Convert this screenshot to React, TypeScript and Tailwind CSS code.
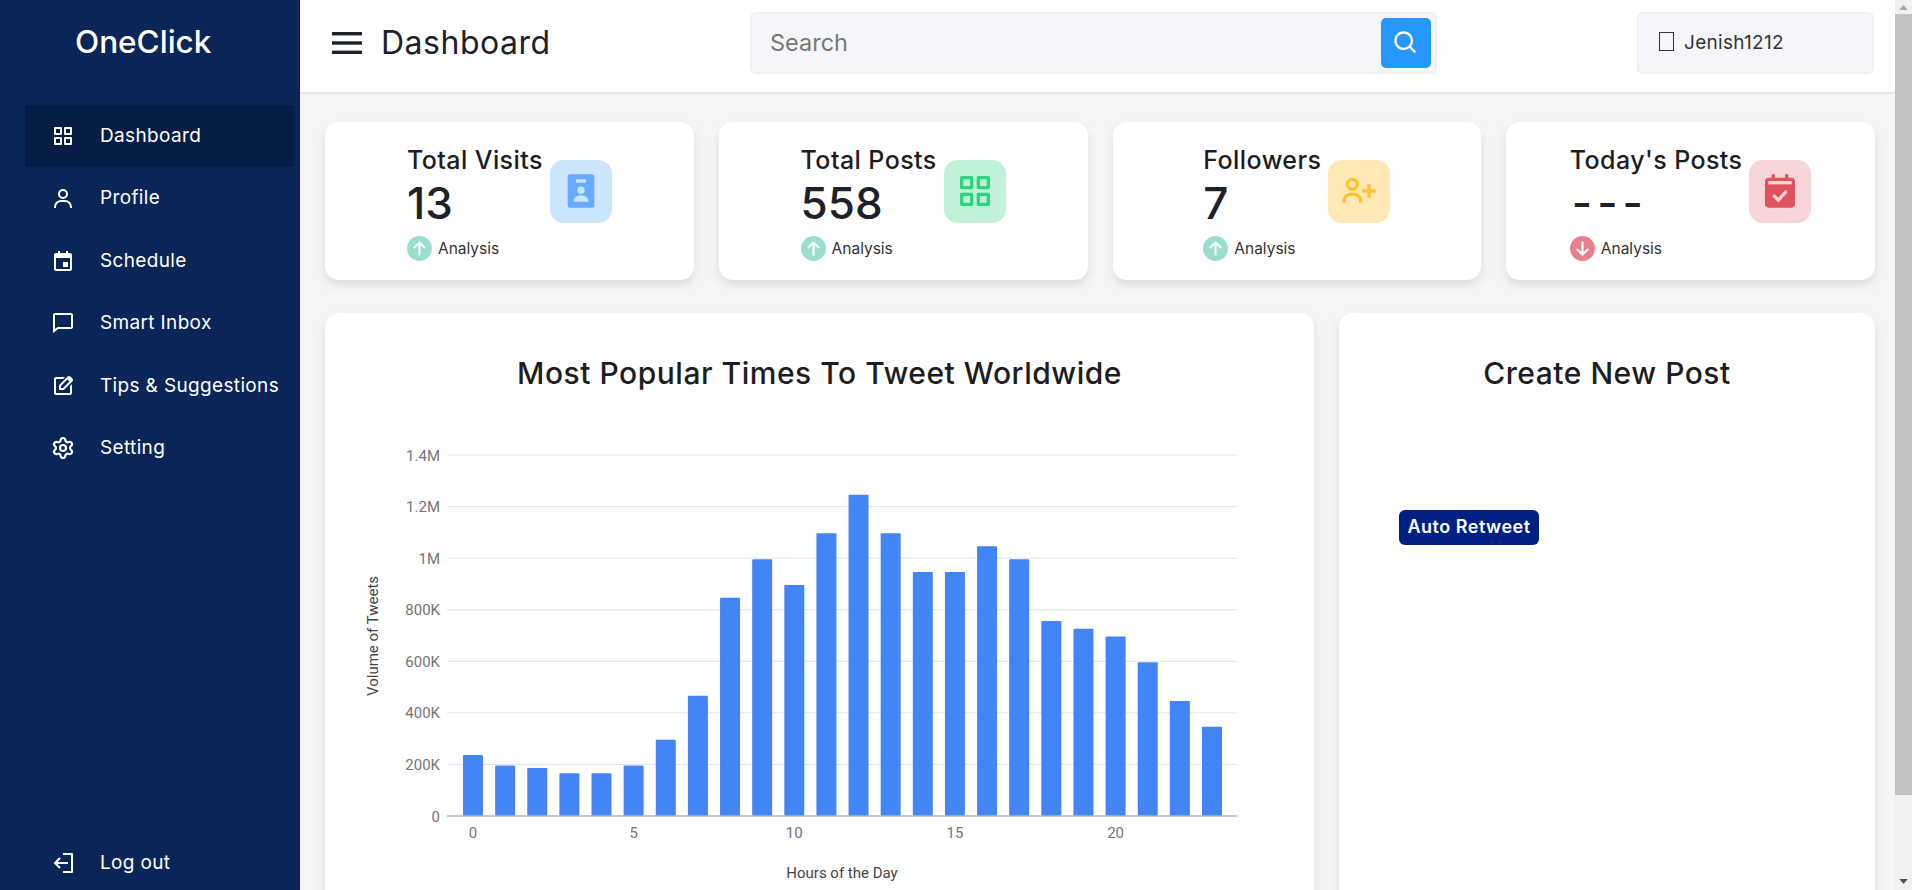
import { Settings } from 'lucide-react';

const navItems = [
    { label: 'Dashboard', icon: 'grid' },
    { label: 'Profile', icon: 'user' },
    { label: 'Schedule', icon: 'calendar' },
    { label: 'Smart Inbox', icon: 'message' },
    { label: 'Tips & Suggestions', icon: 'edit' },
    { label: 'Setting', icon: 'cog' },
];

const GRID_PATH =
    'M10 3H4a1 1 0 0 0-1 1v6a1 1 0 0 0 1 1h6a1 1 0 0 0 1-1V4a1 1 0 0 0-1-1zM9 9H5V5h4v4zm11-6h-6a1 1 0 0 0-1 1v6a1 1 0 0 0 1 1h6a1 1 0 0 0 1-1V4a1 1 0 0 0-1-1zm-1 6h-4V5h4v4zm-9 4H4a1 1 0 0 0-1 1v6a1 1 0 0 0 1 1h6a1 1 0 0 0 1-1v-6a1 1 0 0 0-1-1zm-1 6H5v-4h4v4zm11-6h-6a1 1 0 0 0-1 1v6a1 1 0 0 0 1 1h6a1 1 0 0 0 1-1v-6a1 1 0 0 0-1-1zm-1 6h-4v-4h4v4z';

function NavIcon({ name }: { name: string }) {
    if (name === 'cog') return <Settings className="h-6 w-6" strokeWidth={2.2} />;
    return (
        <svg viewBox="0 0 24 24" className="h-6 w-6" fill="currentColor">
            {name === 'grid' && <path d={GRID_PATH} />}
            {name === 'user' && (
                <path d="M12 2a5 5 0 1 0 5 5 5 5 0 0 0-5-5zm0 8a3 3 0 1 1 3-3 3 3 0 0 1-3 3zm9 11v-1a7 7 0 0 0-7-7h-4a7 7 0 0 0-7 7v1h2v-1a5 5 0 0 1 5-5h4a5 5 0 0 1 5 5v1z" />
            )}
            {name === 'calendar' && (
                <>
                    <path d="M19 4h-2V2h-2v2H9V2H7v2H5c-1.103 0-2 .897-2 2v14c0 1.103.897 2 2 2h14c1.103 0 2-.897 2-2V6c0-1.103-.897-2-2-2zm.002 16H5V9h14l.002 11z" />
                    <path d="M12 13h5v5h-5z" />
                </>
            )}
            {name === 'message' && (
                <path d="M20 2H4c-1.103 0-2 .897-2 2v18l5.333-4H20c1.103 0 2-.897 2-2V4c0-1.103-.897-2-2-2zm0 14H6.667L4 18V4h16v12z" />
            )}
            {name === 'edit' && (
                <>
                    <path d="M19 19H5V5h7l2-2H5c-1.103 0-2 .896-2 2v14c0 1.104.897 2 2 2h14a2 2 0 0 0 2-2v-8.7l-2 2V19z" />
                    <path d="M19.4 2.6a2 2 0 0 0-2.8 0L8 11.2V16h4.8l8.6-8.6a2 2 0 0 0 0-2.8zM12 14h-2v-2l6.4-6.4 2 2z" />
                </>
            )}
        </svg>
    );
}

function LogOutIcon() {
    return (
        <svg viewBox="0 0 24 24" className="h-6 w-6" fill="none" stroke="currentColor" strokeWidth="2">
            <path d="M12 3h9v18h-9" strokeLinejoin="round" />
            <path d="M17 12H4M9 7l-5 5 5 5" />
        </svg>
    );
}

function StatIcon({ kind }: { kind: string }) {
    if (kind === 'badge') {
        return (
            <svg viewBox="0 0 24 24" className="h-10 w-10">
                <rect x="4" y="2" width="16" height="20" rx="1.5" fill="#66a9ff" />
                <rect x="9" y="5" width="6" height="2" fill="#cce5ff" />
                <circle cx="12" cy="11.5" r="2.2" fill="#cce5ff" />
                <path d="M7.5 18.5c0-2.6 2-4 4.5-4s4.5 1.4 4.5 4z" fill="#cce5ff" />
            </svg>
        );
    }
    if (kind === 'grid') {
        return (
            <svg viewBox="0 0 24 24" className="h-10 w-10" fill="#2bd47d">
                <path d={GRID_PATH} />
            </svg>
        );
    }
    if (kind === 'userPlus') {
        return (
            <svg viewBox="0 0 24 24" className="h-10 w-10" fill="#ffc233">
                <path d="M19 8h-2v3h-3v2h3v3h2v-3h3v-2h-3zM4 8a3.91 3.91 0 0 0 4 4 3.91 3.91 0 0 0 4-4 3.91 3.91 0 0 0-4-4 3.91 3.91 0 0 0-4 4zm6 0a1.91 1.91 0 0 1-2 2 1.91 1.91 0 0 1-2-2 1.91 1.91 0 0 1 2-2 1.91 1.91 0 0 1 2 2zM4 18a3 3 0 0 1 3-3h2a3 3 0 0 1 3 3v1h2v-1a5 5 0 0 0-5-5H7a5 5 0 0 0-5 5v1h2z" />
            </svg>
        );
    }
    return (
        <svg viewBox="0 0 24 24" className="h-10 w-10">
            <path
                d="M21 20V6c0-1.103-.897-2-2-2h-2V2h-2v2H9V2H7v2H5c-1.103 0-2 .897-2 2v14c0 1.103.897 2 2 2h14c1.103 0 2-.897 2-2z"
                fill="#e05260"
            />
            <rect x="5" y="6" width="14" height="2" fill="#f7d4d7" />
            <path d="M8 14.5l3 3 5-5.5" fill="none" stroke="#f7d4d7" strokeWidth="2" />
        </svg>
    );
}

const stats = [
    { title: 'Total Visits', value: '13', kind: 'badge', tile: 'bg-[#cce5ff]', up: true },
    { title: 'Total Posts', value: '558', kind: 'grid', tile: 'bg-[#c0f2d8]', up: true },
    { title: 'Followers', value: '7', kind: 'userPlus', tile: 'bg-[#ffe8b3]', up: true },
    { title: "Today's Posts", value: '---', kind: 'calendar', tile: 'bg-[#f7d4d7]', up: false },
];

function StatCard({ title, value, kind, tile, up }: (typeof stats)[number]) {
    return (
        <div className="flex h-[158px] items-center justify-center gap-[7px] rounded-[14px] bg-white shadow-[0_5px_10px_rgba(0,0,0,0.1)]">
            <div className="flex h-full flex-col pt-[20px]">
                <div className="text-[25px] leading-[36px] font-[450] tracking-[0.42px] whitespace-nowrap text-[#1d1d1d]">{title}</div>
                <div className={`h-[50px] text-[44px] leading-[50px] font-medium text-[#1d2129] ${value === '---' ? 'pl-[2px] tracking-[5px]' : ''}`}>{value}</div>
                <div className="mt-[8px] flex items-center gap-[6px]">
                    <span className={`flex h-[25px] w-[25px] items-center justify-center rounded-full ${up ? 'bg-[#99dfcb]' : 'bg-[#e97f8a]'}`}>
                        <svg viewBox="0 0 24 24" className="h-[21px] w-[21px]" fill="none" stroke="#fff" strokeWidth="2.4">
                            {up ? <path d="M12 20V5M5.5 11.5 12 5l6.5 6.5" /> : <path d="M12 4v15M5.5 12.5 12 19l6.5-6.5" />}
                        </svg>
                    </span>
                    <span className="text-[15.5px] leading-[25px] text-[#333]">Analysis</span>
                </div>
            </div>
            <div className={`mb-[20px] flex h-[63px] w-[62px] items-center justify-center rounded-[14px] ${tile}`}>
                <StatIcon kind={kind} />
            </div>
        </div>
    );
}

const tweets = [240, 200, 190, 170, 170, 200, 300, 470, 850, 1000, 900, 1100, 1250, 1100, 950, 950, 1050, 1000, 760, 730, 700, 600, 450, 350];
const yTicks = ['0', '200K', '400K', '600K', '800K', '1M', '1.2M', '1.4M'];

function TweetsChart() {
    const baseY = 816;
    const pxPerK = 361 / 1400;
    return (
        <svg viewBox="325 433 989 457" className="block h-[457px] w-[989px]" style={{ fontFamily: 'Roboto, sans-serif' }}>
            {yTicks.map((tick, i) => {
                const y = baseY - i * 51.57;
                return (
                    <g key={tick}>
                        {i > 0 && <line x1="447" x2="1237" y1={y} y2={y} stroke="#e2e2e2" strokeWidth="1" />}
                        <text x="440" y={y + 5.5} textAnchor="end" fontSize="15" fill="#757575">
                            {tick}
                        </text>
                    </g>
                );
            })}
            {tweets.map((v, i) => (
                <rect key={i} x={463 + i * 32.13} y={baseY - v * pxPerK + 1} width="20" height={v * pxPerK - 1} rx="1" fill="#4285f4" />
            ))}
            <line x1="447" x2="1237" y1={baseY} y2={baseY} stroke="#b4b4b4" strokeWidth="1.5" />
            {[0, 5, 10, 15, 20].map((h) => (
                <text key={h} x={473 + h * 32.13} y={838} textAnchor="middle" fontSize="15" fill="#757575">
                    {h}
                </text>
            ))}
            <text x="842" y="878" textAnchor="middle" fontSize="15" fill="#444">
                Hours of the Day
            </text>
            <text transform="translate(378 636) rotate(-90)" textAnchor="middle" fontSize="15" fill="#444">
                Volume of Tweets
            </text>
        </svg>
    );
}

export default function App() {
    return (
        <div className="flex h-[890px] w-[1912px] overflow-hidden bg-[#f5f5f5] font-['Inter',sans-serif]">
            {/* Sidebar */}
            <aside className="flex w-[300px] shrink-0 flex-col bg-[#0a2558] text-white">
                <div className="h-[105px] pt-[21px] pl-[75px] text-[31.5px] leading-[42px] font-medium">OneClick</div>
                <nav className="flex flex-col pl-[25px]">
                    {navItems.map((item, i) => (
                        <div
                            key={item.label}
                            className={`flex h-[62.4px] w-[269px] items-center gap-[25px] pl-[26px] text-[19px] tracking-[0.35px] whitespace-nowrap ${i === 0 ? 'bg-[#081d45]' : ''}`}
                        >
                            <NavIcon name={item.icon} />
                            <span>{item.label}</span>
                        </div>
                    ))}
                </nav>
                <div className="mt-auto ml-[25px] flex h-[54px] items-center gap-[25px] pl-[26px] text-[19px] tracking-[0.35px]">
                    <LogOutIcon />
                    <span>Log out</span>
                </div>
            </aside>

            {/* Main */}
            <main className="flex min-w-0 flex-1 flex-col">
                <header className="flex h-[94px] shrink-0 items-center border-b-2 border-[#e4e4e4] bg-white pb-[7px]">
                    <div className="flex w-[450px] items-center pl-[32px]">
                        <svg viewBox="0 0 30 22" className="h-[22px] w-[30px]" fill="#1d2129">
                            <rect width="30" height="3.4" />
                            <rect y="9.3" width="30" height="3.4" />
                            <rect y="18.6" width="30" height="3.4" />
                        </svg>
                        <span className="ml-[19px] text-[32px] tracking-[0.5px] text-[#1d2129]">Dashboard</span>
                    </div>
                    <div className="flex h-[62px] w-[687px] items-center justify-between rounded-[6px] border-2 border-[#efeef1] bg-[#f5f6fa] pr-[4px] pl-[18px]">
                        <span className="text-[23.5px] text-[#777]">Search</span>
                        <span className="flex h-[50px] w-[50px] items-center justify-center rounded-[5px] bg-[#2697ff]">
                            <svg viewBox="0 0 24 24" className="h-7 w-7" fill="#fff">
                                <path d="M10 18a7.952 7.952 0 0 0 4.897-1.688l4.396 4.396 1.414-1.414-4.396-4.396A7.952 7.952 0 0 0 18 10c0-4.411-3.589-8-8-8s-8 3.589-8 8 3.589 8 8 8zm0-14c3.309 0 6 2.691 6 6s-2.691 6-6 6-6-2.691-6-6 2.691-6 6-6z" />
                            </svg>
                        </span>
                    </div>
                    <div className="ml-[200px] flex h-[62px] w-[237px] items-center rounded-[6px] border-2 border-[#efeef1] bg-[#f5f6fa] pl-[20px]">
                        <span className="mb-[2px] h-[19px] w-[15px] border border-[#333]" />
                        <span className="ml-[10px] pt-[2px] text-[19px] tracking-[0.3px] text-[#333]">Jenish1212</span>
                    </div>
                </header>

                <div className="flex flex-col pt-[28px] pr-[20px] pl-[25px]">
                    <div className="grid grid-cols-4 gap-[25px]">
                        {stats.map((s) => (
                            <StatCard key={s.title} {...s} />
                        ))}
                    </div>

                    <div className="mt-[33px] flex gap-[25px]">
                        <section className="h-[700px] w-[989px] shrink-0 rounded-[14px] bg-white shadow-[0_5px_10px_rgba(0,0,0,0.1)]">
                            <h2 className="h-[120px] pt-[40px] text-center text-[30px] leading-[40px] font-[450] tracking-[0.52px] text-[#1d1d1d]">
                                Most Popular Times To Tweet Worldwide
                            </h2>
                            <TweetsChart />
                        </section>
                        <section className="h-[700px] flex-1 rounded-[14px] bg-white shadow-[0_5px_10px_rgba(0,0,0,0.1)]">
                            <h2 className="pt-[40px] text-center text-[30px] leading-[40px] font-[450] tracking-[0.52px] text-[#1d1d1d]">Create New Post</h2>
                            <button
                                type="button"
                                className="mt-[117px] ml-[60px] h-[35px] w-[140px] rounded-[6px] bg-[#012084] pb-[2px] text-[18px] font-semibold tracking-[0.5px] text-white"
                            >
                                Auto Retweet
                            </button>
                        </section>
                    </div>
                </div>
            </main>

            {/* Page scrollbar */}
            <div className="flex w-[17px] shrink-0 flex-col bg-[#f1f1f1]">
                <div className="flex h-[14px] items-center justify-center">
                    <svg viewBox="0 0 10 6" className="h-[5px] w-[9px]" fill="#a3a3a3">
                        <path d="M5 0l5 6H0z" />
                    </svg>
                </div>
                <div className="h-[781px] bg-[#c1c1c1]" />
                <div className="mt-auto flex h-[17px] items-center justify-center">
                    <svg viewBox="0 0 10 6" className="h-[5px] w-[9px]" fill="#505050">
                        <path d="M5 6l5-6H0z" />
                    </svg>
                </div>
            </div>
        </div>
    );
}
